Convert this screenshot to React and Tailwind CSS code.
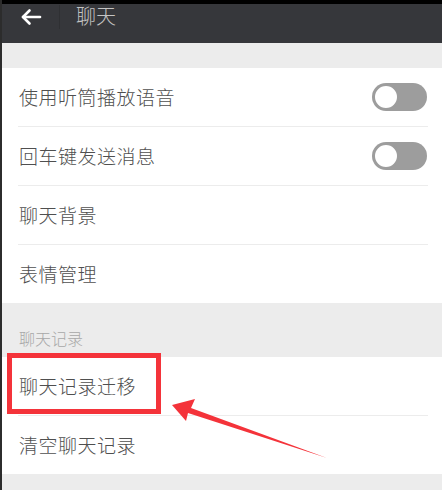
import React from 'react';

const Toggle = () => (
  <div className="w-[55px] h-[28px] rounded-full bg-[#9d9d9d] flex items-center p-[1px]">
    <div className="w-[26px] h-[26px] rounded-full bg-white border-2 border-[#9d9d9d]" />
  </div>
);

const Row = ({ label, toggle, divider = true }) => (
  <div>
    <div className="h-[58px] flex items-center justify-between pl-[17px] pr-[15px]">
      <span className="text-[19px] font-light text-[#4f4f4f] tracking-[0.5px]">{label}</span>
      {toggle && <Toggle />}
    </div>
    {divider && <div className="h-px bg-[#ececec] ml-[16px] mr-[14px]" />}
  </div>
);

export default function App() {
  return (
    <div
      className="relative w-[442px] h-[490px] overflow-hidden bg-[#ececec] border-l-2 border-[#2c2c2c]"
      style={{ fontFamily: '"Noto Sans CJK SC", "Noto Sans", sans-serif' }}
    >
      <div className="h-[43px] bg-[#36373b] border-t-4 border-black flex items-start">
        <div className="w-[58px] h-[24px] flex items-center justify-center border-r border-[#2f3033] mt-[1px]">
          <svg width="22" height="18" viewBox="0 0 22 18" fill="none" stroke="white" strokeWidth="2.6" strokeLinecap="round" strokeLinejoin="round">
            <path d="M20 9H3" />
            <path d="M9.5 2.5L3 9l6.5 6.5" />
          </svg>
        </div>
        <span className="ml-[16px] text-[20px] font-light leading-[24px] text-[#c4c4c4]">聊天</span>
      </div>

      <div className="h-[25px]" />

      <div className="bg-white">
        <Row label="使用听筒播放语音" toggle />
        <Row label="回车键发送消息" toggle />
        <Row label="聊天背景" />
        <Row label="表情管理" divider={false} />
      </div>

      <div className="h-[54px] flex items-end pl-[17px] pb-[7px]">
        <span className="text-[16px] font-light text-[#a8a8a8]">聊天记录</span>
      </div>

      <div className="bg-white">
        <Row label="聊天记录迁移" />
        <Row label="清空聊天记录" divider={false} />
      </div>

      <div className="absolute left-[5px] top-[353px] w-[154px] h-[61px] border-[5px] border-[#f4333a]" />

      <svg className="absolute left-[-2px] top-0 pointer-events-none" width="442" height="490">
        <polygon
          points="172,405 195,399 191,408 327,458 188,413 186,421"
          fill="#f4333a"
        />
      </svg>
    </div>
  );
}
